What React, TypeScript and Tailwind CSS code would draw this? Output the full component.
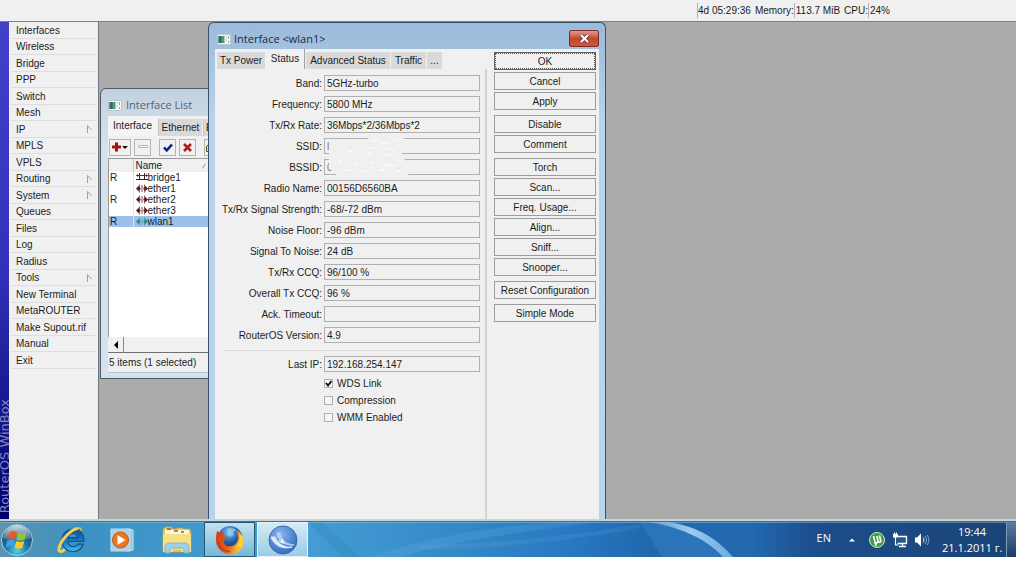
import { ReactNode } from 'react'

interface MenuEntry {
  label: string
  sub?: boolean
}

interface Field {
  id: string
  label: string
  value: string
  faded?: boolean
}

interface Iface {
  flag: string
  name: string
  kind: 'bridge' | 'ether' | 'wlan'
}

const menu: MenuEntry[] = [
  { label: 'Interfaces' },
  { label: 'Wireless' },
  { label: 'Bridge' },
  { label: 'PPP' },
  { label: 'Switch' },
  { label: 'Mesh' },
  { label: 'IP', sub: true },
  { label: 'MPLS' },
  { label: 'VPLS' },
  { label: 'Routing', sub: true },
  { label: 'System', sub: true },
  { label: 'Queues' },
  { label: 'Files' },
  { label: 'Log' },
  { label: 'Radius' },
  { label: 'Tools', sub: true },
  { label: 'New Terminal' },
  { label: 'MetaROUTER' },
  { label: 'Make Supout.rif' },
  { label: 'Manual' },
  { label: 'Exit' },
]

const fields: Field[] = [
  { id: 'band', label: 'Band:', value: '5GHz-turbo' },
  { id: 'frequency', label: 'Frequency:', value: '5800 MHz' },
  { id: 'rate', label: 'Tx/Rx Rate:', value: '36Mbps*2/36Mbps*2' },
  { id: 'ssid', label: 'SSID:', value: 'l', faded: true },
  { id: 'bssid', label: 'BSSID:', value: '0', faded: true },
  { id: 'radio', label: 'Radio Name:', value: '00156D6560BA' },
  { id: 'signal', label: 'Tx/Rx Signal Strength:', value: '-68/-72 dBm' },
  { id: 'noise', label: 'Noise Floor:', value: '-96 dBm' },
  { id: 'snr', label: 'Signal To Noise:', value: '24 dB' },
  { id: 'ccq', label: 'Tx/Rx CCQ:', value: '96/100 %' },
  { id: 'overall', label: 'Overall Tx CCQ:', value: '96 %' },
  { id: 'ack', label: 'Ack. Timeout:', value: '' },
  { id: 'version', label: 'RouterOS Version:', value: '4.9' },
]

const flags = [
  { id: 'wds', label: 'WDS Link', on: true },
  { id: 'compression', label: 'Compression', on: false },
  { id: 'wmm', label: 'WMM Enabled', on: false },
]

const actions = [
  ['OK', 'Cancel', 'Apply'],
  ['Disable', 'Comment'],
  ['Torch', 'Scan...', 'Freq. Usage...', 'Align...', 'Sniff...', 'Snooper...'],
  ['Reset Configuration'],
  ['Simple Mode'],
]

const ifaces: Iface[] = [
  { flag: 'R', name: 'bridge1', kind: 'bridge' },
  { flag: '', name: 'ether1', kind: 'ether' },
  { flag: 'R', name: 'ether2', kind: 'ether' },
  { flag: '', name: 'ether3', kind: 'ether' },
  { flag: 'R', name: 'wlan1', kind: 'wlan' },
]

function WindowIcon() {
  return (
    <svg width="14" height="11" viewBox="0 0 14 11" className="shrink-0">
      <rect x="0.5" y="0.5" width="13" height="10" fill="#f4f7f6" stroke="#b9c6cc" />
      <rect x="1.5" y="2" width="6" height="7" fill="#4f9a86" />
      <rect x="1.5" y="2" width="3" height="7" fill="#2f6f68" />
      <path d="M9 3h1M11.500 2v3M9 6h1M11.500 7v2" stroke="#9aa6a8" />
    </svg>
  )
}

function IfaceIcon({ kind }: { kind: Iface['kind'] }) {
  if (kind === 'bridge') {
    return (
      <svg width="12" height="9" viewBox="0 0 12 9" className="shrink-0">
        <path d="M3.500 0v6M8.500 0v6M0 6.500h12" stroke="#3a2024" fill="none" />
        <path d="M0.500 2.500h11" stroke="#5c2c34" />
        <path d="M2 1L0 2.500L2 4zM10 1l2 1.500L10 4z" fill="#6a1c26" />
      </svg>
    )
  }
  const fill = kind === 'wlan' ? '#2c8f86' : '#5c1822'
  return (
    <svg width="12" height="9" viewBox="0 0 12 9" className="shrink-0">
      <path d="M0 4.500L3 1.500V3.500H4.500v2H3v2zM12 4.500L9 1.500V3.500H7.500v2H9v2z" fill={fill} />
      <path d="M3.500 0.500v8M8.500 0.500v8" stroke={fill} opacity="0.700" />
      <path d="M6 1v7" stroke={kind === 'wlan' ? '#5fa9a8' : '#8a4a50'} />
    </svg>
  )
}

function ToolButton({ label, wide, children }: { label: string; wide?: boolean; children: ReactNode }) {
  return (
    <button
      aria-label={label}
      className={`flex h-[17px] shrink-0 items-center justify-center border border-[#b4b4b4] bg-[#f0f0f0] ${wide ? 'w-[22px]' : 'w-[17px]'}`}
    >
      {children}
    </button>
  )
}

function InterfaceList() {
  return (
    <section className="absolute left-px top-[66px] flex h-[291px] w-[300px] flex-col rounded-t-md border border-[#4d5a66] bg-linear-to-b from-[#c3d1df] via-[#d5e2ee] via-20% to-[#d5e2ee] px-[7px] pb-[5px]">
      <header className="flex h-[27px] shrink-0 items-center gap-1 pt-1.5 font-['Open_Sans',sans-serif] text-[11px] text-[#56626e]">
        <WindowIcon />
        <h2>Interface List</h2>
      </header>
      <div className="flex min-h-0 flex-1 flex-col bg-[#f0f0f0]">
        <div className="flex h-5 shrink-0 items-end gap-px">
          <button className="h-5 w-[49px] bg-[#f4f4f4] pb-0.5 text-center">Interface</button>
          <button className="h-[17px] w-[44px] border-l border-[#c4c4c4] bg-[#d9d9d9] text-center">Ethernet</button>
          <button className="h-[17px] w-[80px] border-l border-[#c4c4c4] bg-[#d9d9d9] pl-0.5 text-left">EoIP Tunnel</button>
        </div>
        <div className="flex h-[22px] shrink-0 items-center gap-[3px] pl-px">
          <ToolButton label="Add" wide>
            <svg width="18" height="10" viewBox="0 0 18 10">
              <path d="M5.500 0.500v9M1 5h9" stroke="#a01414" strokeWidth="3" />
              <path d="M11 4h6l-3 3z" fill="#111" />
            </svg>
          </ToolButton>
          <ToolButton label="Remove">
            <svg width="10" height="4" viewBox="0 0 10 4">
              <path d="M0.500 0.500h9v2h-9z" fill="#f6f6f6" stroke="#b8b8b8" />
            </svg>
          </ToolButton>
          <span className="w-0.5" />
          <ToolButton label="Enable">
            <svg width="10" height="9" viewBox="0 0 10 9">
              <path d="M1 4.500l2.800 2.800L9 1.500" stroke="#10208c" strokeWidth="2.600" fill="none" />
            </svg>
          </ToolButton>
          <ToolButton label="Disable">
            <svg width="9" height="9" viewBox="0 0 9 9">
              <path d="M1 1l7 7M8 1L1 8" stroke="#b01a1a" strokeWidth="2.600" />
            </svg>
          </ToolButton>
          <span className="w-0.5" />
          <ToolButton label="Comment">
            <svg width="13" height="9" viewBox="0 0 13 9" className="shrink-0">
              <path d="M0.500 3.500l3-3h9v8h-12z" fill="#e6dc74" stroke="#55551c" />
            </svg>
          </ToolButton>
        </div>
        <div className="min-h-0 flex-1 border-l border-t border-[#9a9a9a] bg-white">
          <table className="w-full table-fixed border-collapse leading-[11px]">
            <thead>
              <tr className="h-[13px] bg-[#f0f0f0] text-left">
                <th className="w-6 border-r border-[#c8c8c8] p-0" />
                <th className="p-0 pl-0.5 font-normal">
                  <span className="flex w-[70px] items-center justify-between">
                    Name
                    <svg width="4" height="6" viewBox="0 0 4 6">
                      <path d="M0.500 5.500L3.500 0.500" stroke="#999" />
                    </svg>
                  </span>
                </th>
              </tr>
            </thead>
            <tbody>
              {ifaces.map((row) => (
                <tr key={row.name} className={row.kind === 'wlan' ? 'h-[11px] bg-[#9cc0ea]' : 'h-[11px]'}>
                  <td className="border-r border-[#e4e4e4] p-0 pl-px">{row.flag}</td>
                  <td className="p-0 pl-0.5">
                    <span className="flex h-[11px] items-center">
                      <IfaceIcon kind={row.kind} />
                      {row.name}
                    </span>
                  </td>
                </tr>
              ))}
            </tbody>
          </table>
        </div>
        <div className="flex h-4 shrink-0 border-b border-[#707070]">
          <button aria-label="Scroll left" className="flex w-4 items-center justify-center border-r border-[#8a8a8a]">
            <svg width="4" height="8" viewBox="0 0 4 8">
              <path d="M4 0v8L0 4z" fill="#000" />
            </svg>
          </button>
        </div>
        <p className="h-5 shrink-0 border-b border-[#b8c4ce] pl-px leading-5">5 items (1 selected)</p>
      </div>
    </section>
  )
}

function FieldRow({ field }: { field: Field }) {
  return (
    <div className="flex h-4 items-center gap-0.5">
      <label htmlFor={field.id} className="flex-1 text-right">
        {field.label}
      </label>
      <input
        id={field.id}
        readOnly
        value={field.value}
        className={`h-4 w-[156px] border border-[#b0b0b0] bg-[#f0f0f0] px-0.5 ${field.faded ? 'text-[#777]' : ''}`}
      />
    </div>
  )
}

// rubbed out part of the SSID and BSSID boxes
function Smudge() {
  return (
    <svg width="82" height="38" viewBox="0 0 82 38" className="absolute left-[114px] top-[68px]">
      <path d="M0 6h36l4-6h34l3 8-4 8 3 7 6 8-3 7H8L0 31z" fill="#f0f0f0" />
      <path
        d="M42 4h6M52 6h9M64 3h4M40 11h6M57 12h8M20 14h3M37 17h6M53 18h9M10 24h3M26 27h3M41 26h4M56 28h10M70 24h3M17 33h6M33 34h8M50 33h5M66 34h6"
        stroke="#f8f8f8"
        strokeWidth="2"
      />
      <path d="M22 10h1M48 14h1M63 9h1M15 28h1M35 31h1M56 22h1M70 31h1" stroke="#dadada" />
    </svg>
  )
}

function InterfaceWindow() {
  return (
    <section className="absolute bottom-0 left-[109px] top-0 flex w-[398px] flex-col rounded-t-md border border-b-0 border-[#3c5068] bg-linear-to-b from-[#9bbbdc] via-[#b9d3ea] via-20% to-[#b6d4ec] px-[6px]">
      <header className="flex h-[26px] shrink-0 items-center gap-[3px] pl-0.5 pt-1.5 font-['Open_Sans',sans-serif] text-[11px] text-[#1c2a3a]">
        <WindowIcon />
        <h2 className="flex-1">Interface &lt;wlan1&gt;</h2>
        <button
          aria-label="Close"
          className="mb-0.5 flex h-[17px] w-[30px] items-center justify-center rounded-xs border border-[#7c2c28] bg-linear-to-b from-[#df9a8c] via-[#c8452f] to-[#c9573f]"
        >
          <svg width="11" height="9" viewBox="0 0 11 9">
            <path d="M2 1l7 7M9 1L2 8" stroke="#5c3030" strokeWidth="3.600" />
            <path d="M2 1l7 7M9 1L2 8" stroke="#fff" strokeWidth="2.200" />
          </svg>
        </button>
      </header>
      <div className="flex min-h-0 flex-1 bg-[#f0f0f0]">
        <div className="flex w-[272px] flex-col">
          <div className="flex h-5 items-end gap-px pl-0.5">
            <button className="h-[17px] w-12 bg-[#dadada] text-center">Tx Power</button>
            <button className="h-5 w-[39px] border-r border-[#a0a0a0] pb-0.5 text-center">Status</button>
            <button className="h-[17px] w-[84px] bg-[#dadada] text-center">Advanced Status</button>
            <button className="h-[17px] w-[35px] bg-[#dadada] text-center">Traffic</button>
            <button className="h-[17px] w-[15px] bg-[#dadada] text-center">...</button>
          </div>
          <form className="relative flex flex-1 flex-col gap-[5px] border-r-2 border-[#d4d4d4] pr-[5px] pt-1.5">
            {fields.map((field) => (
              <FieldRow key={field.id} field={field} />
            ))}
            <Smudge />
            <hr className="ml-2 mt-0.5 border-[#dcdcdc]" />
            <FieldRow field={{ id: 'lastip', label: 'Last IP:', value: '192.168.254.147' }} />
            <div className="-mt-0.5 pl-[109px]">
              {flags.map((flag) => (
                <label key={flag.id} className="flex h-[17px] items-center gap-1">
                  <input
                    type="checkbox"
                    defaultChecked={flag.on}
                    className="peer size-[9px] appearance-none border border-[#b0b0b0] bg-[#f6f6f6]"
                  />
                  <svg width="7" height="7" viewBox="0 0 7 7" className="-ml-3 mr-px hidden peer-checked:block">
                    <path d="M1 3l2 2.500L6.500 1" stroke="#000" strokeWidth="1.800" fill="none" />
                  </svg>
                  {flag.label}
                </label>
              ))}
            </div>
          </form>
        </div>
        <div className="flex flex-1 flex-col gap-[5px] pl-[7px] pr-[3px] pt-[3px]">
          {actions.map((group) => (
            <div key={group[0]} className="flex flex-col gap-0.5">
              {group.map((label) => (
                <button
                  key={label}
                  className={
                    label === 'OK'
                      ? 'h-[18px] border border-[#666] outline-1 -outline-offset-2 outline-dotted outline-[#555]'
                      : 'h-[18px] border border-[#9c9c9c]'
                  }
                >
                  {label}
                </button>
              ))}
            </div>
          ))}
        </div>
      </div>
    </section>
  )
}

function StartOrb() {
  return (
    <svg width="34" height="34" viewBox="0 0 34 34">
      <defs>
        <radialGradient id="orb" cx="50%" cy="85%" r="85%">
          <stop offset="0" stopColor="#4fd0e8" />
          <stop offset="0.450" stopColor="#1c6ea0" />
          <stop offset="1" stopColor="#1b4468" />
        </radialGradient>
        <linearGradient id="orbShine" x1="0" y1="0" x2="0" y2="1">
          <stop offset="0" stopColor="#fff" stopOpacity="0.800" />
          <stop offset="1" stopColor="#fff" stopOpacity="0.100" />
        </linearGradient>
      </defs>
      <circle cx="17" cy="17" r="15.500" fill="url(#orb)" stroke="#a8cfe0" strokeWidth="1" />
      <path d="M3 15a14 13 0 0 1 28 0c-9 3-18 3-28 0z" fill="url(#orbShine)" />
      <path d="M9.500 9.500c2.500-1.500 5-1.500 7.700-0.200l-1.800 7c-2.300-1.300-5-1.300-7.800 0z" fill="#e8592a" />
      <path d="M18.300 9.800c2.700 1.300 5.400 1.300 8.200 0l-1.900 7c-2.700 1.200-5.400 1.200-8.100 0z" fill="#8cc63c" />
      <path d="M7.300 17.500c2.700-1.400 5.200-1.400 7.800 0l-1.700 6.700c-2.500-1.300-5-1.300-7.800 0z" fill="#3fa0e4" />
      <path d="M16.200 18c2.600 1.300 5.300 1.300 8.100 0l-1.800 6.700c-2.700 1.300-5.400 1.300-8 0z" fill="#fbc72c" />
    </svg>
  )
}

function ExplorerIcon() {
  return (
    <svg width="30" height="30" viewBox="0 0 30 30">
      <defs>
        <linearGradient id="ie" x1="0" y1="0" x2="0" y2="1">
          <stop offset="0" stopColor="#14508c" />
          <stop offset="0.600" stopColor="#1c7cc8" />
          <stop offset="1" stopColor="#3cc0ee" />
        </linearGradient>
      </defs>
      <path
        d="M28 16.500H12c0.300 3.500 2.300 5 5.200 5 2 0 3.600-0.900 4.500-2.300h5.600c-1.500 4.500-5.300 7.300-10.200 7.300C10.600 26.500 6 22 6 15.500S10.600 4 17 4s11.300 4.600 11 12.500zM12.200 12.700h9.600c-0.400-2.600-2-4.200-4.700-4.200s-4.500 1.600-4.900 4.200z"
        fill="url(#ie)"
        stroke="#14508c"
        strokeWidth="1.200"
      />
      <path d="M22 3.500C15 4 5 15 3 23c-0.800 4 2 4.500 6 1.500" stroke="#f0cf58" strokeWidth="3" fill="none" />
      <path d="M22 3.500c2.500-1 3.500 0 3 2.200" stroke="#e8bf48" strokeWidth="1.500" fill="none" />
    </svg>
  )
}

function PlayerIcon() {
  return (
    <svg width="24" height="26" viewBox="0 0 24 26">
      <path d="M17 2l6 1v20l-6 1z" fill="#8fc4dc" stroke="#cbe4ef" />
      <rect x="1" y="2" width="19" height="22" fill="#a9d3e4" stroke="#c4e0ec" />
      <circle cx="10.500" cy="13" r="8" fill="#ee7422" stroke="#c8571a" />
      <path d="M7.500 8l8 5-8 5z" fill="#fff" />
    </svg>
  )
}

function FolderIcon() {
  return (
    <svg width="30" height="28" viewBox="0 0 30 28">
      <path d="M1 3l3-2h5l2 2h3l2-1h4l2 1h6l1 4v19H1z" fill="#e9c95a" stroke="#caa63c" strokeWidth="0.700" />
      <rect x="3" y="4" width="24" height="4" fill="#fdf7d8" />
      <path d="M5 3h4M12 5h4M19 6h3" stroke="#b84c38" strokeWidth="1.500" />
      <path d="M1 8h28v18H1z" fill="#f7df84" />
      <path d="M3 27v-6c0-2 2-4 4-4h16c2 0 4 2 4 4v6h-5v-3c0-1-1-2-2-2H10c-1 0-2 1-2 2v3z" fill="#9fd0ea" stroke="#6aaed0" strokeWidth="0.800" />
      <rect x="11" y="24" width="8" height="2" fill="#f0b83c" />
    </svg>
  )
}

function FirefoxIcon() {
  return (
    <svg width="32" height="32" viewBox="0 0 32 32">
      <defs>
        <radialGradient id="globe" cx="45%" cy="25%" r="80%">
          <stop offset="0" stopColor="#7cc4ee" />
          <stop offset="0.500" stopColor="#235ca8" />
          <stop offset="1" stopColor="#12306c" />
        </radialGradient>
        <linearGradient id="fox" x1="0" y1="0" x2="1" y2="0.300">
          <stop offset="0" stopColor="#cc3a1c" />
          <stop offset="0.600" stopColor="#e8601a" />
          <stop offset="1" stopColor="#fbc934" />
        </linearGradient>
      </defs>
      <circle cx="16" cy="14.500" r="12.500" fill="url(#globe)" />
      <path d="M13 5c3-2 7-1 9 1l-3 2 1 3-4 2-3-2 1-3z" fill="#a4d8f4" opacity="0.600" />
      <path
        d="M3 7c1.300 1 2.500 1.200 4 1.200 1.600 0 2.900 0.600 3.800 1.600-0.900 0.700-1.500 1.600-1.700 2.800 1.500 0 3.200 0.300 4.100 1.400-1.500 1-3.300 1.600-3.400 3.400 0 3 2.800 5 6.200 4.800 5-0.200 8-4 8.200-8 0-3-0.600-6-2.200-8.400C27 8.500 30 13 29.800 18 29.300 25.500 23 30.500 15.800 30.300 8 30 2 24 2 16.500 2 13 2.200 10 3 7z"
        fill="url(#fox)"
      />
      <path d="M25 9.500c2 5 0.500 11.500-5 15 6-0.500 9.100-5 8.500-10.300-0.400-2-1.800-3.700-3.500-4.700z" fill="#fcd848" opacity="0.850" />
      <path d="M4 18c1.500 6 6 9.500 12 9.500" stroke="#a82c14" strokeWidth="1.400" fill="none" opacity="0.600" />
    </svg>
  )
}

function WinBoxIcon() {
  return (
    <svg width="32" height="32" viewBox="0 0 32 32">
      <defs>
        <radialGradient id="ball" cx="40%" cy="30%" r="75%">
          <stop offset="0" stopColor="#8cb8ec" />
          <stop offset="0.600" stopColor="#5088d0" />
          <stop offset="1" stopColor="#3668b4" />
        </radialGradient>
      </defs>
      <circle cx="16" cy="16" r="14" fill="url(#ball)" stroke="#3f6aa8" />
      <path d="M4 13c3 8 11 13 21 10-6 1-14-2-17-10z" fill="#dceafa" stroke="#dceafa" />
      <path d="M10 9c1 8 8 13 17 12-8-1-13-5-14-12z" fill="#b4d0f4" stroke="#b4d0f4" />
      <path d="M12 17l4 2-1-4" stroke="#fff" strokeWidth="1.200" fill="none" />
    </svg>
  )
}

function Taskbar() {
  return (
    <footer className="relative flex h-9 shrink-0 items-center overflow-hidden border-t border-[#3f6f8c] text-white">
      <svg
        viewBox="0 0 1016 36"
        preserveAspectRatio="none"
        className="absolute inset-0 size-full"
        aria-hidden="true"
      >
        <defs>
          <linearGradient id="bar" x1="0" y1="0" x2="1" y2="0">
            <stop offset="0" stopColor="#5d93ae" />
            <stop offset="0.080" stopColor="#3c92c2" />
            <stop offset="0.300" stopColor="#459dd4" />
            <stop offset="0.460" stopColor="#3388c6" />
            <stop offset="0.560" stopColor="#2878c2" />
            <stop offset="0.640" stopColor="#2068ae" />
            <stop offset="0.740" stopColor="#2269b0" />
            <stop offset="0.800" stopColor="#1c4e8c" />
            <stop offset="1" stopColor="#1b4374" />
          </linearGradient>
          <linearGradient id="streak" x1="0" y1="0" x2="1" y2="0">
            <stop offset="0" stopColor="#b4dcf8" stopOpacity="0.300" />
            <stop offset="0.500" stopColor="#b4dcf8" stopOpacity="0.850" />
            <stop offset="1" stopColor="#8cc4f0" stopOpacity="0.700" />
          </linearGradient>
        </defs>
        <rect width="1016" height="36" fill="url(#bar)" />
        <path d="M370 36C430 14 500 4 560 0h40C520 10 450 20 400 36z" fill="#6ab8e4" opacity="0.200" />
        <path d="M420 24c80-2 150-10 220-22v4c-70 14-150 22-220 22z" fill="#6ab8e4" opacity="0.150" />
        <path d="M308 0l34 36h18L322 0z" fill="#2c84b4" opacity="0.300" />
        <path d="M640 0l22 36h70L676 0z" fill="#4a92d4" opacity="0.300" />
        <path d="M648 0c34 5 62 20 75 36h10C716 16 698 5 668 0z" fill="url(#streak)" />
        <path d="M0 0.500h1016" stroke="#b4d8e8" opacity="0.400" />
      </svg>
      <div className="relative flex flex-1 items-center">
        <button aria-label="Start" className="mr-[22px]">
          <StartOrb />
        </button>
        <button aria-label="Internet Explorer" className="mr-6">
          <ExplorerIcon />
        </button>
        <button aria-label="Media Player" className="mr-[28px]">
          <PlayerIcon />
        </button>
        <button aria-label="File Explorer" className="mr-3">
          <FolderIcon />
        </button>
        <button
          aria-label="Firefox"
          className="mr-0.5 flex h-[35px] w-[51px] items-center justify-center border border-[#235a7c] bg-linear-to-b from-[#c4e2ee] to-[#74b8d8]"
        >
          <FirefoxIcon />
        </button>
        <button
          aria-label="WinBox"
          className="flex h-[35px] w-[51px] items-center justify-center border border-[#e4f4fa] bg-linear-to-b from-[#d4ebf4] to-[#9acce4]"
        >
          <WinBoxIcon />
        </button>
      </div>
      <div className="relative flex h-full items-center font-['Open_Sans',sans-serif] text-[11px]">
        <span className="mb-0.5 mr-[18px]">EN</span>
        <svg width="6" height="4" viewBox="0 0 6 4" className="mr-[14px]">
          <path d="M0 3.500L3 0.500l3 3z" fill="#fff" />
        </svg>
        <svg width="16" height="16" viewBox="0 0 16 16" className="mr-[7px]">
          <circle cx="8" cy="8" r="7.500" fill="#3f9c4c" stroke="#cfe8d2" />
          <path d="M4.500 4l1.500 6c0.500 1.600 3 1.400 3-0.400L8 4M9 9c0.500 1.500 2 1.500 3 0.500M10.500 3.500L12 10" stroke="#fff" strokeWidth="1.600" fill="none" />
          <path d="M6 10l1 4" stroke="#fff" strokeWidth="1.600" />
        </svg>
        <svg width="16" height="16" viewBox="0 0 16 16" className="mr-[6px]">
          <path d="M6 4.500h8.500v7H5.500" fill="#2a5a8c" stroke="#fff" strokeWidth="1.300" />
          <path d="M7 14.500h7M10.500 12v2" stroke="#fff" strokeWidth="1.300" />
          <path d="M1 2h5v3.500H1z" fill="#fff" />
          <path d="M2.500 0.500v2M4.500 0.500v2M3.500 5v8h3" stroke="#fff" strokeWidth="1.200" fill="none" />
        </svg>
        <svg width="16" height="16" viewBox="0 0 16 16" className="mr-3">
          <path d="M1 5.500h2L7 1.500v13l-4-4H1z" fill="#fff" />
          <path d="M9 5.500c1.200 1.500 1.200 3.500 0 5" stroke="#e8f0f8" fill="none" />
          <path d="M11 4c2 2.500 2 5.500 0 8M13 3c2.500 3 2.500 7 0 10" stroke="#86a8c8" fill="none" />
        </svg>
        <div className="w-[60px] whitespace-nowrap text-center leading-4">
          <p>19:44</p>
          <p>21.1.2011 г.</p>
        </div>
        <button aria-label="Show desktop" className="ml-1 h-full w-[10px] border-l border-[#7c9cbc] bg-linear-to-b from-[#5c7c9c] to-[#1c3c68]" />
      </div>
    </footer>
  )
}

export default function App() {
  return (
    <div className="flex min-h-screen flex-col bg-white pb-[21px] pr-2 font-['Liberation_Sans',Arial,sans-serif] text-[10px] text-[#1c1c1c]">
      <header className="flex h-[22px] shrink-0 items-center justify-end border-b border-[#808080] bg-[#f0f0f0] pr-[126px]">
        <span className="border-l border-[#b0b0b0] pr-1">4d 05:29:36</span>
        <span>Memory:</span>
        <span className="border-l border-[#b0b0b0] pl-px pr-1">113.7 MiB</span>
        <span>CPU:</span>
        <span className="border-l border-[#b0b0b0] pl-px">24%</span>
      </header>

      <main className="flex flex-1 border-b-2 border-[#c8d4d8] bg-[#f0f0f0]">
        <aside className="flex w-[9px] shrink-0 items-end justify-center bg-linear-to-b from-[#4440c8] via-[#3430b8] to-[#00006c] pb-1.5">
          <span className="rotate-180 whitespace-nowrap font-['DejaVu_Sans',sans-serif] text-[13px] leading-[9px] text-[#8484bc] [writing-mode:vertical-rl]">
            RouterOS WinBox
          </span>
        </aside>
        <nav className="flex w-[90px] shrink-0 flex-col border-r border-[#707880] pl-0.5 pr-0.5">
          {menu.map((item) => (
            <button
              key={item.label}
              className="flex items-center justify-between border-b border-[#dedede] pl-[5px] pr-1 text-left odd:h-[17px] even:h-4"
            >
              {item.label}
              {item.sub && (
                <svg width="5" height="8" viewBox="0 0 5 8">
                  <path d="M0.500 8V0.500L4.500 5" stroke="#a0a0a0" fill="none" />
                </svg>
              )}
            </button>
          ))}
        </nav>
        <div className="relative flex-1 overflow-hidden bg-[#ababab]">
          <InterfaceList />
          <InterfaceWindow />
        </div>
      </main>

      <Taskbar />
    </div>
  )
}
